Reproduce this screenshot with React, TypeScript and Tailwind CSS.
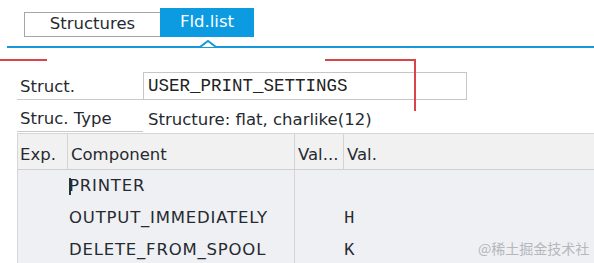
import React from 'react';

const sans = { fontFamily: '"DejaVu Sans", Verdana, sans-serif' };
const mono = { fontFamily: '"Liberation Mono", "Courier New", monospace' };

const rows = [
  { name: 'PRINTER', val: '', cursor: true },
  { name: 'OUTPUT_IMMEDIATELY', val: 'H' },
  { name: 'DELETE_FROM_SPOOL', val: 'K' },
];

export default function App() {
  return (
    <div
      className="relative w-[594px] h-[263px] overflow-hidden bg-white text-[#262a30] text-[16.5px]"
      style={sans}
    >
      {/* Tabs */}
      <div className="flex items-end h-[37px] pt-[8px] pl-[24px]">
        <div className="h-[25px] w-[136px] flex items-center justify-center border border-r-0 border-[#a6a6a6] bg-white">
          Structures
        </div>
        <div className="h-[29px] w-[94px] flex items-center justify-center bg-[#0c9be0] text-white">
          Fld.list
        </div>
      </div>

      {/* Tab strip underline with notch */}
      <div className="relative mt-[9px] ml-[7px] h-[2px] bg-[#1898d8]">
        <svg className="absolute left-[193px] top-[-6px]" width="16" height="8" viewBox="0 0 16 8">
          <polyline points="0,7 8,1 16,7" fill="#fff" stroke="#1898d8" strokeWidth="2" />
        </svg>
      </div>

      {/* Form */}
      <div className="mt-[24px] pl-[17px]">
        <div className="flex h-[28px]">
          <div className="w-[126px] flex items-center pt-[4px] pl-[3px] border-b border-[#c9c9c9]">Struct.</div>
          <div className="w-[324px] flex items-center pt-[1px] pl-[4px] border border-[#c6c6c6] text-[17.5px] text-[#222]" style={mono}>
            USER_PRINT_SETTINGS
          </div>
        </div>
        <div className="flex h-[32px]">
          <div className="w-[126px] flex items-center pt-[8px] pl-[3px] border-b border-[#c9c9c9]">Struc. Type</div>
          <div className="flex items-center pt-[8px] pl-[5px]">Structure: flat, charlike(12)</div>
        </div>
      </div>

      {/* Table */}
      <div className="ml-[17px] mt-[1px] border-l border-t border-[#d6d6d6]">
        <div className="flex h-[36px] bg-[#f1f1f1] border-b border-[#cfcfcf]">
          <div className="w-[50px] flex items-center pt-[7px] pl-[2px] border-r border-[#d4d4d4]">Exp.</div>
          <div className="w-[227px] flex items-center pt-[7px] pl-[3px] border-r border-[#d4d4d4]">Component</div>
          <div className="w-[49px] flex items-center pt-[7px] pl-[3px] border-r border-[#d4d4d4]">Val...</div>
          <div className="flex-1 flex items-center pt-[7px] pl-[3px]">Val.</div>
        </div>
        <div className="bg-[#eef0f3]">
          {rows.map((r) => (
            <div key={r.name} className="flex h-[32px]">
              <div className="w-[50px]" />
              <div className="w-[227px] flex items-center pl-[1px] border-r border-[#d4d4d4]">
                {r.cursor && <span className="w-[2px] h-[17px] bg-[#1f3b2c] mr-[-2px]" />}
                <span className="tracking-[0.8px]">{r.name}</span>
              </div>
              <div className="w-[49px]" />
              <div className="flex-1 flex items-center text-[17.5px]" style={mono}>
                {r.val}
              </div>
            </div>
          ))}
        </div>
      </div>

      {/* Watermark */}
      <div
        className="absolute left-[478px] top-[238px] text-[14px] leading-[20px] text-[#b4b8bd]"
        style={{ fontFamily: '"Noto Sans CJK SC", "Noto Sans", sans-serif' }}
      >
        @稀土掘金技术社区
      </div>

      {/* Red annotation lines */}
      <div className="absolute left-0 top-[59px] w-[47px] h-[2px] bg-[#d9434a]" />
      <div className="absolute left-[325px] top-[59px] w-[91px] h-[2px] bg-[#d9434a]" />
      <div className="absolute left-[414px] top-[59px] w-[2px] h-[52px] bg-[#d9434a]" />
    </div>
  );
}
